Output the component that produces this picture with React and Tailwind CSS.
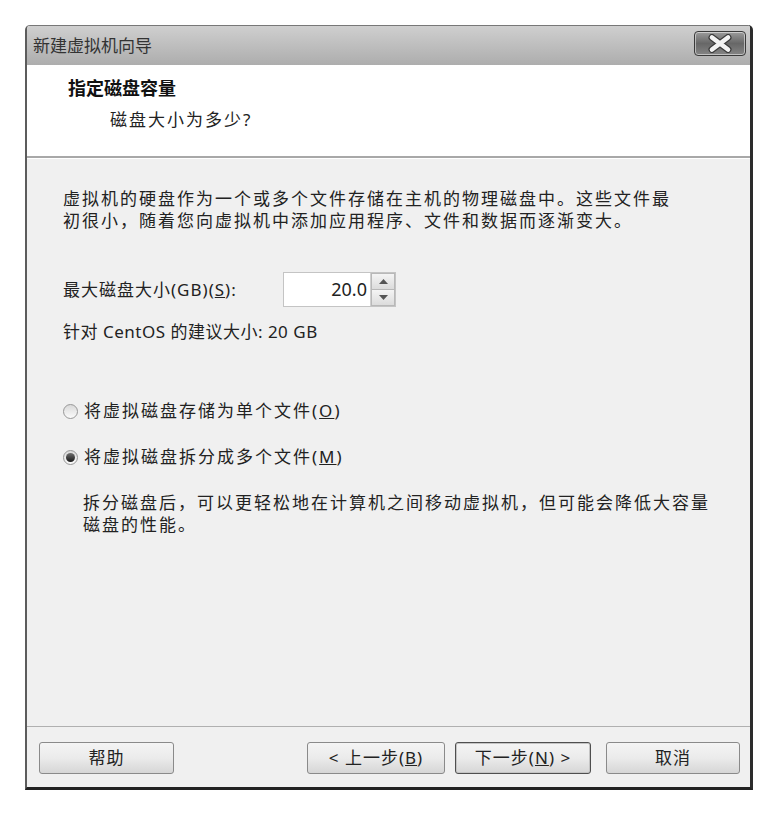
import React from "react";

const FONT = { fontFamily: '"Noto Sans", "Noto Sans CJK SC", sans-serif' };

function CloseButton() {
  return (
    <div className="w-[52px] h-[25px] rounded-[4px] border border-[#3a3a3a] bg-gradient-to-b from-[#9c9c9c] via-[#676767] to-[#858585] shadow-[inset_0_0_0_1px_rgba(255,255,255,0.5)] flex items-center justify-center">
      <svg width="26" height="19" viewBox="0 0 26 19">
        <path d="M5 3.5 L21 15.5 M21 3.5 L5 15.5" stroke="#3c3c3c" strokeWidth="7" strokeLinecap="round" />
        <path d="M5 3.5 L21 15.5 M21 3.5 L5 15.5" stroke="#f4f4f4" strokeWidth="4.6" strokeLinecap="round" />
      </svg>
    </div>
  );
}

function Radio({ checked }) {
  return (
    <span className="w-[15px] h-[15px] rounded-full border border-[#979797] bg-gradient-to-b from-[#dadada] to-[#fafafa] flex items-center justify-center shrink-0">
      {checked && (
        <span className="w-[9px] h-[9px] rounded-full bg-gradient-to-b from-[#707070] to-[#1a1a1a]" />
      )}
    </span>
  );
}

function Spinner() {
  return (
    <div className="flex w-[113px] h-[35px] border border-[#c4c4c4] bg-white">
      <div className="flex-1 flex items-center justify-end pr-[3px] text-[18px] text-[#222]">
        20.0
      </div>
      <div className="w-[25px] flex flex-col border-l border-[#d0d0d0]">
        <div className="flex-1 flex items-center justify-center border border-[#b8b8b8] bg-gradient-to-b from-[#f4f4f4] to-[#dcdcdc]">
          <svg width="9" height="5" viewBox="0 0 9 5">
            <path d="M0 5 L4.5 0 L9 5 Z" fill="#555" />
          </svg>
        </div>
        <div className="flex-1 flex items-center justify-center border border-t-0 border-[#b8b8b8] bg-gradient-to-b from-[#f4f4f4] to-[#dcdcdc]">
          <svg width="9" height="5" viewBox="0 0 9 5">
            <path d="M0 0 L9 0 L4.5 5 Z" fill="#555" />
          </svg>
        </div>
      </div>
    </div>
  );
}

function Btn({ w, focused, children }) {
  return (
    <button
      className={`h-[32px] ${w} rounded-[3px] border ${
        focused ? "border-[#4f4f4f] shadow-[inset_0_0_0_1px_#c4c4c4]" : "border-[#8a8a8a]"
      } bg-gradient-to-b from-[#f4f4f4] via-[#ebebeb] to-[#d6d6d6] text-[17px] text-[#222] tracking-[1px] flex items-center justify-center`}
    >
      {children}
    </button>
  );
}

export default function App() {
  return (
    <div className="w-[766px] h-[821px] bg-white pt-[25px] pl-[25px]" style={FONT}>
      <div className="w-[728px] h-[765px] flex flex-col border-l-2 border-[#5c5c5c] border-r-[3px] border-r-[#2c2c2c] border-b-[3px] border-b-[#222] rounded-tl-[5px] rounded-tr-[5px] overflow-hidden">
        {/* title bar */}
        <div className="h-[40px] shrink-0 flex items-center justify-between pl-[6px] pr-[4px] bg-gradient-to-b from-[#cfcfcf] to-[#adadad] border-t border-[#777]">
          <span className="text-[17px] text-[#333]">新建虚拟机向导</span>
          <div className="self-start mt-[5px]">
            <CloseButton />
          </div>
        </div>

        {/* header */}
        <div className="h-[93px] shrink-0 bg-white border-b-2 border-[#a8a8a8] pt-[11px] pl-[41px]">
          <div className="text-[18px] leading-[24px] font-bold text-[#111]">
            指定磁盘容量
          </div>
          <div className="mt-[9px] pl-[42px] text-[17px] leading-[22px] tracking-[2px] text-[#222]">
            磁盘大小为多少?
          </div>
        </div>

        {/* content */}
        <div className="flex-1 bg-[#f0f0f0] pt-[29px] pl-[36px] text-[#222] border-t border-white">
          <p className="text-[17px] leading-[22px] tracking-[2px]">
            虚拟机的硬盘作为一个或多个文件存储在主机的物理磁盘中。这些文件最
            <br />
            初很小，随着您向虚拟机中添加应用程序、文件和数据而逐渐变大。
          </p>

          <div className="mt-[40px] flex items-center">
            <span className="w-[220px] text-[17px] leading-[22px] tracking-[1px]">
              最大磁盘大小(GB)(<u>S</u>):
            </span>
            <Spinner />
          </div>

          <p className="mt-[14px] text-[17px] leading-[22px] tracking-[0.5px]">
            针对 CentOS 的建议大小: 20 GB
          </p>

          <label className="mt-[57px] flex items-center gap-[6px] text-[17px] leading-[22px] tracking-[2px]">
            <Radio />
            <span>
              将虚拟磁盘存储为单个文件(<u>O</u>)
            </span>
          </label>

          <label className="mt-[24px] flex items-center gap-[6px] text-[17px] leading-[22px] tracking-[2px]">
            <Radio checked />
            <span>
              将虚拟磁盘拆分成多个文件(<u>M</u>)
            </span>
          </label>

          <p className="mt-[24px] pl-[20px] text-[17px] leading-[22px] tracking-[2px]">
            拆分磁盘后，可以更轻松地在计算机之间移动虚拟机，但可能会降低大容量
            <br />
            磁盘的性能。
          </p>
        </div>

        {/* footer */}
        <div className="h-[61px] shrink-0 bg-[#f0f0f0] border-t border-[#b0b0b0] pt-[15px] pl-[12px] pr-[10px] flex items-start">
          <Btn w="w-[135px]">帮助</Btn>
          <div className="ml-auto flex gap-[10px]">
            <Btn w="w-[138px]">
              &lt; 上一步(<u>B</u>)
            </Btn>
            <div className="flex gap-[15px]">
              <Btn w="w-[136px]" focused>
                下一步(<u>N</u>) &gt;
              </Btn>
              <Btn w="w-[134px]">取消</Btn>
            </div>
          </div>
        </div>
      </div>
    </div>
  );
}
